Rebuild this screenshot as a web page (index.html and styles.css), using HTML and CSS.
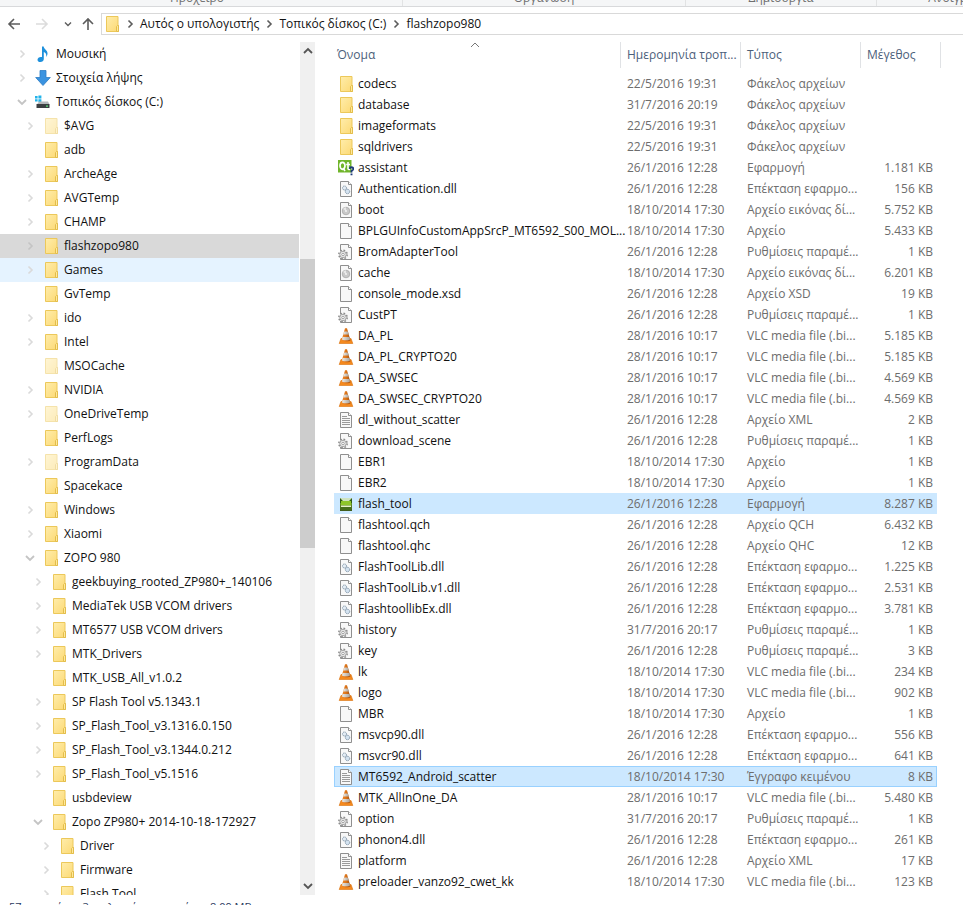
FILE: index.html
```html
<!DOCTYPE html>
<html lang="el">
<head>
<meta charset="utf-8">
<meta name="viewport" content="width=device-width, initial-scale=1">
<title>flashzopo980</title>
<link rel="stylesheet" href="styles.css">
</head>
<body>
<svg class="sprite" aria-hidden="true">
  <defs>
    <linearGradient id="fold" x1="0" y1="0" x2="1" y2="1"><stop offset="0" stop-color="#ffedab"/><stop offset="1" stop-color="#fcd974"/></linearGradient>
    <linearGradient id="cone" x1="0" x2="1"><stop offset="0" stop-color="#f08c30"/><stop offset=".5" stop-color="#dd7418"/><stop offset="1" stop-color="#9c4c10"/></linearGradient>
    <linearGradient id="steel" x1="0" x2="1"><stop offset="0" stop-color="#eeebe6"/><stop offset="1" stop-color="#a8a29a"/></linearGradient>
    <linearGradient id="droid" x1="0" y1="0" x2="0" y2="1"><stop offset="0" stop-color="#7fb52a"/><stop offset="1" stop-color="#3e5a1c"/></linearGradient>
  </defs>
  <symbol id="folder" viewBox="0 0 16 16"><path d="M2.500.5h11.500v9h.5v6h-12z" fill="url(#fold)" stroke="#ecc85a"/><path d="M12.500 15.500v-5l1-1h1v6z" fill="#ffe99a" stroke="#e3bd4c"/></symbol>
  <symbol id="page" viewBox="0 0 16 16"><path d="M2.500.5h8l3 3v12h-11z" fill="#f8f8f8" stroke="#8f8f8f"/><path d="M10.500.5v3h3" fill="#fff" stroke="#8f8f8f"/></symbol>
  <symbol id="text" viewBox="0 0 16 16"><use href="#page"/><path d="M4 4.500h5M4 6.500h8M4 8.500h8M4 10.500h8M4 12.500h8" stroke="#9a9a9a"/></symbol>
  <symbol id="dll" viewBox="0 0 16 16"><use href="#page"/><circle cx="6.500" cy="7" r="2" fill="#e4edf5" stroke="#8296a8" stroke-dasharray="1.200 .5"/><circle cx="9.500" cy="10.500" r="2.200" fill="#d3e2f0" stroke="#8296a8" stroke-dasharray="1.200 .5"/></symbol>
  <symbol id="disc" viewBox="0 0 16 16"><use href="#page"/><circle cx="8" cy="9" r="3.800" fill="#c9c9c9" stroke="#a2a2a2" stroke-width=".7"/><path d="M8 9L5 7a3.600 3.600 0 0 1 3-1.700z" fill="#e8e8e8"/><circle cx="8" cy="9" r="1" fill="#f2f2f2"/></symbol>
  <symbol id="ini" viewBox="0 0 16 16"><use href="#page"/><circle cx="5" cy="10.500" r="4.200" fill="#efefef" stroke="#8d8d8d" stroke-width="1.500" stroke-dasharray="1.700 1.600"/><circle cx="5" cy="10.500" r="3.200" fill="#efefef" stroke="#959595" stroke-width=".8"/><circle cx="5" cy="10.500" r="1.300" fill="#fff" stroke="#8d8d8d" stroke-width=".8"/></symbol>
  <symbol id="vlc" viewBox="0 0 16 16"><path d="M3 10.500h10l1.800 5H1.200z" fill="#f58a1e" stroke="#d8700c" stroke-width=".6"/><path d="M7 .3h2L12.500 12.500q-4.500 2-9 0z" fill="url(#cone)"/><path d="M6.200 3.400h3.600l1 3.200H5.200z" fill="url(#steel)"/><path d="M4.600 9h6.800l.7 2.400q-4.100 1.700-8.200 0z" fill="url(#steel)"/></symbol>
  <symbol id="qt" viewBox="0 0 16 16"><path d="M0 0h13.500v12.500H0z" fill="#70b52b"/><ellipse cx="4.500" cy="5.800" rx="2.500" ry="3.500" fill="none" stroke="#fff" stroke-width="1.700"/><path d="M5 8l2 3M10 2v6.500q0 1 2 .8M8.200 4.500H12" fill="none" stroke="#fff" stroke-width="1.600"/><path d="M11.700 8.800q.3-1.700 1.900-1.500 2 .2 1.500 2-.3.800-1.600 1.700v1.400M13.500 13.400v1.800" fill="none" stroke="#1e3a78" stroke-width="1.900"/></symbol>
  <symbol id="flash" viewBox="0 0 16 16"><path d="M2 2h12v13H2z" fill="url(#droid)"/><path d="M2 2h12v3H2z" fill="#cfe3c0"/><path d="M2 2l3 3h6l3-3v5H2z" fill="#2f5a14"/><path d="M3 5h10v4H3z" fill="#8ec62a"/><path d="M3 9.500h10v1.500H3z" fill="#e6f4c8"/><path d="M3 11h10v3H3z" fill="#466e1c"/></symbol>
  <symbol id="music" viewBox="0 0 16 16"><path d="M7 .5h1.700c.2 2.600 3.800 3.600 3.800 7 0 1.500-.7 2.700-1.300 3.500.5-2.600-.4-4.300-2.400-5v7c0 1.700-1.600 3-3.400 3-1.700 0-2.900-.9-2.900-2.300 0-1.600 1.600-2.800 3.300-2.800.5 0 .8 0 1.200.2z" fill="#1e90dc"/></symbol>
  <symbol id="down" viewBox="0 0 16 16"><path d="M5 .5h6v7h4.300L8 15.500.7 7.500H5z" fill="#3a93e0" stroke="#2c7cc4" stroke-width=".8"/></symbol>
  <symbol id="drive" viewBox="0 0 16 16"><path d="M0 2h2.600v2.400H0zM3.400 1.600H6.400v2.800h-3zM0 5.200h2.600v2.400H0zM3.400 5.200H6.400V8h-3z" fill="#22b3ea"/><path d="M4 7.500h9l1.500 3H2z" fill="#b4b8bb"/><path d="M1.500 10h13v4h-13z" fill="#3b3f42"/><path d="M11 11.500h2v1.200h-2z" fill="#5be07a"/></symbol>
  <symbol id="right" viewBox="0 0 16 16"><path d="M6.500 4.500L10 8l-3.500 3.500" fill="none" stroke="currentColor" stroke-width="1.600"/></symbol>
  <symbol id="open" viewBox="0 0 16 16"><path d="M4 6l4 4 4-4" fill="none" stroke="currentColor" stroke-width="1.800"/></symbol>
  <symbol id="back" viewBox="0 0 16 16"><path d="M14 8H3M8 3L3 8l5 5" fill="none" stroke="currentColor" stroke-width="1.600"/></symbol>
</svg>

<div class="ribbon">
  <span class="group g1">Πρόχειρο</span><span class="group g2">Οργάνωση</span><span class="group g3">Δημιουργία</span><span class="group g4">Άνοιγμα</span>
</div>

<nav class="address-bar" aria-label="Διεύθυνση">
  <button class="nav-btn" aria-label="Πίσω"><svg class="icon"><use href="#back"/></svg></button>
  <button class="nav-btn off" aria-label="Εμπρός" disabled><svg class="icon flip"><use href="#back"/></svg></button>
  <button class="nav-btn recent" aria-label="Πρόσφατα"><svg class="icon small"><use href="#open"/></svg></button>
  <button class="nav-btn up" aria-label="Επάνω"><svg class="icon turn"><use href="#back"/></svg></button>
  <div class="path">
    <svg class="icon"><use href="#folder"/></svg>
    <svg class="icon sep"><use href="#right"/></svg><a href="#pc">Αυτός ο υπολογιστής</a>
    <svg class="icon sep"><use href="#right"/></svg><a href="#c">Τοπικός δίσκος (C:)</a>
    <svg class="icon sep"><use href="#right"/></svg><a href="#here">flashzopo980</a>
  </div>
</nav>

<main class="panes">
  <aside class="side">
    <ul class="tree">
      <li><div class="node"><button class="tog" aria-label="Ανάπτυξη"><svg class="icon"><use href="#right"/></svg></button><a href="#n"><svg class="icon"><use href="#music"/></svg>Μουσική</a></div></li>
      <li><div class="node"><button class="tog" aria-label="Ανάπτυξη"><svg class="icon"><use href="#right"/></svg></button><a href="#n"><svg class="icon"><use href="#down"/></svg>Στοιχεία λήψης</a></div></li>
      <li><div class="node"><button class="tog opened" aria-label="Σύμπτυξη"><svg class="icon"><use href="#open"/></svg></button><a href="#n"><svg class="icon"><use href="#drive"/></svg>Τοπικός δίσκος (C:)</a></div>
        <ul class="l2">
          <li><div class="node dim"><button class="tog" aria-label="Ανάπτυξη"><svg class="icon"><use href="#right"/></svg></button><a href="#n"><svg class="icon"><use href="#folder"/></svg>$AVG</a></div></li>
          <li><div class="node leaf"><a href="#n"><svg class="icon"><use href="#folder"/></svg>adb</a></div></li>
          <li><div class="node"><button class="tog" aria-label="Ανάπτυξη"><svg class="icon"><use href="#right"/></svg></button><a href="#n"><svg class="icon"><use href="#folder"/></svg>ArcheAge</a></div></li>
          <li><div class="node"><button class="tog" aria-label="Ανάπτυξη"><svg class="icon"><use href="#right"/></svg></button><a href="#n"><svg class="icon"><use href="#folder"/></svg>AVGTemp</a></div></li>
          <li><div class="node"><button class="tog" aria-label="Ανάπτυξη"><svg class="icon"><use href="#right"/></svg></button><a href="#n"><svg class="icon"><use href="#folder"/></svg>CHAMP</a></div></li>
          <li><div class="node current"><button class="tog" aria-label="Ανάπτυξη"><svg class="icon"><use href="#right"/></svg></button><a href="#n"><svg class="icon"><use href="#folder"/></svg>flashzopo980</a></div></li>
          <li><div class="node hover"><button class="tog" aria-label="Ανάπτυξη"><svg class="icon"><use href="#right"/></svg></button><a href="#n"><svg class="icon"><use href="#folder"/></svg>Games</a></div></li>
          <li><div class="node leaf"><a href="#n"><svg class="icon"><use href="#folder"/></svg>GvTemp</a></div></li>
          <li><div class="node"><button class="tog" aria-label="Ανάπτυξη"><svg class="icon"><use href="#right"/></svg></button><a href="#n"><svg class="icon"><use href="#folder"/></svg>ido</a></div></li>
          <li><div class="node"><button class="tog" aria-label="Ανάπτυξη"><svg class="icon"><use href="#right"/></svg></button><a href="#n"><svg class="icon"><use href="#folder"/></svg>Intel</a></div></li>
          <li><div class="node leaf dim"><a href="#n"><svg class="icon"><use href="#folder"/></svg>MSOCache</a></div></li>
          <li><div class="node"><button class="tog" aria-label="Ανάπτυξη"><svg class="icon"><use href="#right"/></svg></button><a href="#n"><svg class="icon"><use href="#folder"/></svg>NVIDIA</a></div></li>
          <li><div class="node dim"><button class="tog" aria-label="Ανάπτυξη"><svg class="icon"><use href="#right"/></svg></button><a href="#n"><svg class="icon"><use href="#folder"/></svg>OneDriveTemp</a></div></li>
          <li><div class="node leaf"><a href="#n"><svg class="icon"><use href="#folder"/></svg>PerfLogs</a></div></li>
          <li><div class="node dim"><button class="tog" aria-label="Ανάπτυξη"><svg class="icon"><use href="#right"/></svg></button><a href="#n"><svg class="icon"><use href="#folder"/></svg>ProgramData</a></div></li>
          <li><div class="node leaf"><a href="#n"><svg class="icon"><use href="#folder"/></svg>Spacekace</a></div></li>
          <li><div class="node"><button class="tog" aria-label="Ανάπτυξη"><svg class="icon"><use href="#right"/></svg></button><a href="#n"><svg class="icon"><use href="#folder"/></svg>Windows</a></div></li>
          <li><div class="node"><button class="tog" aria-label="Ανάπτυξη"><svg class="icon"><use href="#right"/></svg></button><a href="#n"><svg class="icon"><use href="#folder"/></svg>Xiaomi</a></div></li>
          <li><div class="node"><button class="tog opened" aria-label="Σύμπτυξη"><svg class="icon"><use href="#open"/></svg></button><a href="#n"><svg class="icon"><use href="#folder"/></svg>ZOPO 980</a></div>
            <ul class="l3">
              <li><div class="node"><button class="tog" aria-label="Ανάπτυξη"><svg class="icon"><use href="#right"/></svg></button><a href="#n"><svg class="icon"><use href="#folder"/></svg>geekbuying_rooted_ZP980+_140106</a></div></li>
              <li><div class="node"><button class="tog" aria-label="Ανάπτυξη"><svg class="icon"><use href="#right"/></svg></button><a href="#n"><svg class="icon"><use href="#folder"/></svg>MediaTek USB VCOM drivers</a></div></li>
              <li><div class="node"><button class="tog" aria-label="Ανάπτυξη"><svg class="icon"><use href="#right"/></svg></button><a href="#n"><svg class="icon"><use href="#folder"/></svg>MT6577 USB VCOM drivers</a></div></li>
              <li><div class="node"><button class="tog" aria-label="Ανάπτυξη"><svg class="icon"><use href="#right"/></svg></button><a href="#n"><svg class="icon"><use href="#folder"/></svg>MTK_Drivers</a></div></li>
              <li><div class="node leaf"><a href="#n"><svg class="icon"><use href="#folder"/></svg>MTK_USB_All_v1.0.2</a></div></li>
              <li><div class="node"><button class="tog" aria-label="Ανάπτυξη"><svg class="icon"><use href="#right"/></svg></button><a href="#n"><svg class="icon"><use href="#folder"/></svg>SP Flash Tool v5.1343.1</a></div></li>
              <li><div class="node"><button class="tog" aria-label="Ανάπτυξη"><svg class="icon"><use href="#right"/></svg></button><a href="#n"><svg class="icon"><use href="#folder"/></svg>SP_Flash_Tool_v3.1316.0.150</a></div></li>
              <li><div class="node"><button class="tog" aria-label="Ανάπτυξη"><svg class="icon"><use href="#right"/></svg></button><a href="#n"><svg class="icon"><use href="#folder"/></svg>SP_Flash_Tool_v3.1344.0.212</a></div></li>
              <li><div class="node"><button class="tog" aria-label="Ανάπτυξη"><svg class="icon"><use href="#right"/></svg></button><a href="#n"><svg class="icon"><use href="#folder"/></svg>SP_Flash_Tool_v5.1516</a></div></li>
              <li><div class="node leaf"><a href="#n"><svg class="icon"><use href="#folder"/></svg>usbdeview</a></div></li>
              <li><div class="node"><button class="tog opened" aria-label="Σύμπτυξη"><svg class="icon"><use href="#open"/></svg></button><a href="#n"><svg class="icon"><use href="#folder"/></svg>Zopo ZP980+ 2014-10-18-172927</a></div>
                <ul class="l4">
                  <li><div class="node"><button class="tog" aria-label="Ανάπτυξη"><svg class="icon"><use href="#right"/></svg></button><a href="#n"><svg class="icon"><use href="#folder"/></svg>Driver</a></div></li>
                  <li><div class="node"><button class="tog" aria-label="Ανάπτυξη"><svg class="icon"><use href="#right"/></svg></button><a href="#n"><svg class="icon"><use href="#folder"/></svg>Firmware</a></div></li>
                  <li><div class="node"><button class="tog" aria-label="Ανάπτυξη"><svg class="icon"><use href="#right"/></svg></button><a href="#n"><svg class="icon"><use href="#folder"/></svg>Flash Tool</a></div></li>
                </ul>
              </li>
            </ul>
          </li>
        </ul>
      </li>
    </ul>
    <div class="scrollbar">
      <button class="sb-btn" aria-label="Κύλιση επάνω"><svg class="icon rot"><use href="#open"/></svg></button>
      <div class="track"><div class="before"></div><div class="thumb"></div><div class="after"></div></div>
      <button class="sb-btn" aria-label="Κύλιση κάτω"><svg class="icon"><use href="#open"/></svg></button>
    </div>
  </aside>

  <section class="files">
    <table>
      <colgroup><col class="c-name"><col class="c-date"><col class="c-type"><col class="c-size"><col class="c-end"></colgroup>
      <thead><tr><th>Όνομα<svg class="sort" viewBox="0 0 10 6"><path d="M1 5l4-4 4 4" fill="none" stroke="#777"/></svg></th><th>Ημερομηνία τροπ...</th><th>Τύπος</th><th colspan="2">Μέγεθος</th></tr></thead>
      <tbody>
        <tr><td><svg class="icon"><use href="#folder"/></svg>codecs</td><td>22/5/2016 19:31</td><td>Φάκελος αρχείων</td><td></td></tr>
        <tr><td><svg class="icon"><use href="#folder"/></svg>database</td><td>31/7/2016 20:19</td><td>Φάκελος αρχείων</td><td></td></tr>
        <tr><td><svg class="icon"><use href="#folder"/></svg>imageformats</td><td>22/5/2016 19:31</td><td>Φάκελος αρχείων</td><td></td></tr>
        <tr><td><svg class="icon"><use href="#folder"/></svg>sqldrivers</td><td>22/5/2016 19:31</td><td>Φάκελος αρχείων</td><td></td></tr>
        <tr><td><svg class="icon"><use href="#qt"/></svg>assistant</td><td>26/1/2016 12:28</td><td>Εφαρμογή</td><td>1.181 KB</td></tr>
        <tr><td><svg class="icon"><use href="#dll"/></svg>Authentication.dll</td><td>26/1/2016 12:28</td><td>Επέκταση εφαρμο...</td><td>156 KB</td></tr>
        <tr><td><svg class="icon"><use href="#disc"/></svg>boot</td><td>18/10/2014 17:30</td><td>Αρχείο εικόνας δί...</td><td>5.752 KB</td></tr>
        <tr><td><svg class="icon"><use href="#page"/></svg>BPLGUInfoCustomAppSrcP_MT6592_S00_MOL...</td><td>18/10/2014 17:30</td><td>Αρχείο</td><td>5.433 KB</td></tr>
        <tr><td><svg class="icon"><use href="#ini"/></svg>BromAdapterTool</td><td>26/1/2016 12:28</td><td>Ρυθμίσεις παραμέ...</td><td>1 KB</td></tr>
        <tr><td><svg class="icon"><use href="#disc"/></svg>cache</td><td>18/10/2014 17:30</td><td>Αρχείο εικόνας δί...</td><td>6.201 KB</td></tr>
        <tr><td><svg class="icon"><use href="#page"/></svg>console_mode.xsd</td><td>26/1/2016 12:28</td><td>Αρχείο XSD</td><td>19 KB</td></tr>
        <tr><td><svg class="icon"><use href="#ini"/></svg>CustPT</td><td>26/1/2016 12:28</td><td>Ρυθμίσεις παραμέ...</td><td>1 KB</td></tr>
        <tr><td><svg class="icon"><use href="#vlc"/></svg>DA_PL</td><td>28/1/2016 10:17</td><td>VLC media file (.bi...</td><td>5.185 KB</td></tr>
        <tr><td><svg class="icon"><use href="#vlc"/></svg>DA_PL_CRYPTO20</td><td>28/1/2016 10:17</td><td>VLC media file (.bi...</td><td>5.185 KB</td></tr>
        <tr><td><svg class="icon"><use href="#vlc"/></svg>DA_SWSEC</td><td>28/1/2016 10:17</td><td>VLC media file (.bi...</td><td>4.569 KB</td></tr>
        <tr><td><svg class="icon"><use href="#vlc"/></svg>DA_SWSEC_CRYPTO20</td><td>28/1/2016 10:17</td><td>VLC media file (.bi...</td><td>4.569 KB</td></tr>
        <tr><td><svg class="icon"><use href="#text"/></svg>dl_without_scatter</td><td>26/1/2016 12:28</td><td>Αρχείο XML</td><td>2 KB</td></tr>
        <tr><td><svg class="icon"><use href="#ini"/></svg>download_scene</td><td>26/1/2016 12:28</td><td>Ρυθμίσεις παραμέ...</td><td>1 KB</td></tr>
        <tr><td><svg class="icon"><use href="#page"/></svg>EBR1</td><td>18/10/2014 17:30</td><td>Αρχείο</td><td>1 KB</td></tr>
        <tr><td><svg class="icon"><use href="#page"/></svg>EBR2</td><td>18/10/2014 17:30</td><td>Αρχείο</td><td>1 KB</td></tr>
        <tr class="sel"><td><svg class="icon"><use href="#flash"/></svg>flash_tool</td><td>26/1/2016 12:28</td><td>Εφαρμογή</td><td>8.287 KB</td></tr>
        <tr><td><svg class="icon"><use href="#page"/></svg>flashtool.qch</td><td>26/1/2016 12:28</td><td>Αρχείο QCH</td><td>6.432 KB</td></tr>
        <tr><td><svg class="icon"><use href="#page"/></svg>flashtool.qhc</td><td>26/1/2016 12:28</td><td>Αρχείο QHC</td><td>12 KB</td></tr>
        <tr><td><svg class="icon"><use href="#dll"/></svg>FlashToolLib.dll</td><td>26/1/2016 12:28</td><td>Επέκταση εφαρμο...</td><td>1.225 KB</td></tr>
        <tr><td><svg class="icon"><use href="#dll"/></svg>FlashToolLib.v1.dll</td><td>26/1/2016 12:28</td><td>Επέκταση εφαρμο...</td><td>2.531 KB</td></tr>
        <tr><td><svg class="icon"><use href="#dll"/></svg>FlashtoollibEx.dll</td><td>26/1/2016 12:28</td><td>Επέκταση εφαρμο...</td><td>3.781 KB</td></tr>
        <tr><td><svg class="icon"><use href="#ini"/></svg>history</td><td>31/7/2016 20:17</td><td>Ρυθμίσεις παραμέ...</td><td>1 KB</td></tr>
        <tr><td><svg class="icon"><use href="#ini"/></svg>key</td><td>26/1/2016 12:28</td><td>Ρυθμίσεις παραμέ...</td><td>3 KB</td></tr>
        <tr><td><svg class="icon"><use href="#vlc"/></svg>lk</td><td>18/10/2014 17:30</td><td>VLC media file (.bi...</td><td>234 KB</td></tr>
        <tr><td><svg class="icon"><use href="#vlc"/></svg>logo</td><td>18/10/2014 17:30</td><td>VLC media file (.bi...</td><td>902 KB</td></tr>
        <tr><td><svg class="icon"><use href="#page"/></svg>MBR</td><td>18/10/2014 17:30</td><td>Αρχείο</td><td>1 KB</td></tr>
        <tr><td><svg class="icon"><use href="#dll"/></svg>msvcp90.dll</td><td>26/1/2016 12:28</td><td>Επέκταση εφαρμο...</td><td>556 KB</td></tr>
        <tr><td><svg class="icon"><use href="#dll"/></svg>msvcr90.dll</td><td>26/1/2016 12:28</td><td>Επέκταση εφαρμο...</td><td>641 KB</td></tr>
        <tr class="sel focus"><td><svg class="icon"><use href="#text"/></svg>MT6592_Android_scatter</td><td>18/10/2014 17:30</td><td>Έγγραφο κειμένου</td><td>8 KB</td></tr>
        <tr><td><svg class="icon"><use href="#vlc"/></svg>MTK_AllInOne_DA</td><td>28/1/2016 10:17</td><td>VLC media file (.bi...</td><td>5.480 KB</td></tr>
        <tr><td><svg class="icon"><use href="#ini"/></svg>option</td><td>31/7/2016 20:17</td><td>Ρυθμίσεις παραμέ...</td><td>1 KB</td></tr>
        <tr><td><svg class="icon"><use href="#dll"/></svg>phonon4.dll</td><td>26/1/2016 12:28</td><td>Επέκταση εφαρμο...</td><td>261 KB</td></tr>
        <tr><td><svg class="icon"><use href="#text"/></svg>platform</td><td>26/1/2016 12:28</td><td>Αρχείο XML</td><td>17 KB</td></tr>
        <tr><td><svg class="icon"><use href="#vlc"/></svg>preloader_vanzo92_cwet_kk</td><td>18/10/2014 17:30</td><td>VLC media file (.bi...</td><td>123 KB</td></tr>
        <tr><td><svg class="icon"><use href="#page"/></svg></td><td></td><td></td><td></td></tr>
      </tbody>
    </table>
  </section>
</main>

<footer class="status"><span>57 στοιχεία</span><span>3 επιλεγμένα στοιχεία</span><span>8,09 MB</span></footer>
</body>
</html>
```
FILE: styles.css
```css
* { box-sizing: border-box; }

body {
  margin: 0;
  height: 100vh;
  overflow: hidden;
  display: flex;
  flex-direction: column;
  background: #fff;
  color: #111;
  font: 12px/20px "Open Sans", "Noto Sans", sans-serif;
}

button { padding: 0; border: 0; background: none; font: inherit; color: inherit; }
a { color: inherit; text-decoration: none; }
ul { margin: 0; padding: 0; list-style: none; }

.sprite { position: absolute; width: 0; height: 0; }
.icon { flex: none; width: 16px; height: 16px; }

/* Ribbon captions */
.ribbon {
  flex: none;
  display: flex;
  align-items: flex-end;
  height: 7px;
  overflow: hidden;
  background: #f5f6f7;
  border-bottom: 1px solid #d8d9db;
  color: #6f6f6f;
}
.group { flex: none; height: 18px; text-align: center; border-right: 1px solid #e2e3e4; }
.g1 { width: 403px; padding-right: 8px; }
.g2 { width: 283px; }
.g3 { width: 191px; }
.g4 { width: 150px; }

/* Navigation and path */
.address-bar {
  flex: none;
  display: flex;
  align-items: center;
  height: 35px;
  padding: 6px 0 7px 6px;
  color: #5c5c5c;
}
.nav-btn { display: flex; justify-content: center; width: 16px; margin-right: 12px; }
.nav-btn.off { margin-right: 10px; color: #dcdcdc; }
.nav-btn.recent { margin-right: 4px; }
.nav-btn.up { margin-right: 5px; }
.flip { transform: scaleX(-1); }
.turn { transform: rotate(90deg); }
.rot { transform: rotate(180deg); }
.small { width: 12px; height: 12px; }
.path {
  flex: 1;
  display: flex;
  align-items: center;
  height: 22px;
  padding-left: 2px;
  border: 1px solid #d9d9d9;
  border-right: 0;
  color: #111;
  white-space: nowrap;
}
.sep { margin: 0 2px; color: #5c5c5c; }

/* Panes */
.panes { flex: 1; min-height: 0; display: flex; }
.side { flex: none; display: flex; width: 315px; }
.tree { flex: 1; overflow: hidden; white-space: nowrap; margin-right: 1px; }
.node { display: flex; align-items: center; height: 24px; padding-left: 14px; }
.l2 .node { padding-left: 22px; }
.l3 .node { padding-left: 30px; }
.l4 .node { padding-left: 38px; }
.node a { display: flex; align-items: center; gap: 5px; margin-left: 5px; }
.tog { width: 16px; height: 16px; color: #dadada; }
.tog.opened { color: #c4c4c4; }
.current .tog { color: #c4c4c4; }
.leaf::before { content: ""; width: 16px; }
.dim a .icon { opacity: .5; }
.current { background: #d9d9d9; }
.hover { background: #e5f3ff; }

.scrollbar { flex: none; display: flex; flex-direction: column; width: 15px; background: #f0f0f0; }
.sb-btn { height: 18px; color: #555; display: flex; align-items: center; justify-content: center; }
.track { flex: 1; display: flex; flex-direction: column; }
.before { flex: 199; }
.thumb { flex: 289; background: #cdcdcd; }
.after { flex: 329; }

/* File list */
.files { flex: 1; min-width: 0; overflow: hidden; padding-left: 19px; }
table { table-layout: fixed; width: 607px; border-collapse: separate; border-spacing: 0; white-space: nowrap; }
.c-name { width: 287px; }
.c-date, .c-type { width: 120px; }
.c-size { width: 76px; }
.c-end { width: 4px; }
th {
  height: 26px;
  padding: 0 0 0 6px;
  border-right: 1px solid #e0e2e5;
  color: #4c607a;
  font-weight: 400;
  text-align: left;
}
th:first-child { position: relative; padding-left: 3px; }
.sort { position: absolute; left: 136px; top: 0; width: 10px; height: 6px; }
thead::after { content: ""; display: block; height: 5px; }
td { height: 21px; padding: 0 0 0 6px; color: #6d6d6d; }
td:first-child { padding-left: 4px; color: #111; }
td:nth-child(4) { padding-right: 4px; text-align: right; }
td .icon { margin-right: 4px; vertical-align: middle; }
.sel td { background: #cce8ff; }
.focus td { box-shadow: inset 0 1px #99d1ff, inset 0 -1px #99d1ff; }
.focus td:first-child { box-shadow: inset 1px 0 #99d1ff, inset 0 1px #99d1ff, inset 0 -1px #99d1ff; }
.focus td:last-child { box-shadow: inset -1px 0 #99d1ff, inset 0 1px #99d1ff, inset 0 -1px #99d1ff; }

/* Status bar */
.status {
  flex: none;
  display: flex;
  gap: 14px;
  height: 10px;
  padding: 2px 0 0 9px;
  overflow: hidden;
  color: #2b3a5e;
  font-size: 11px;
}
```
